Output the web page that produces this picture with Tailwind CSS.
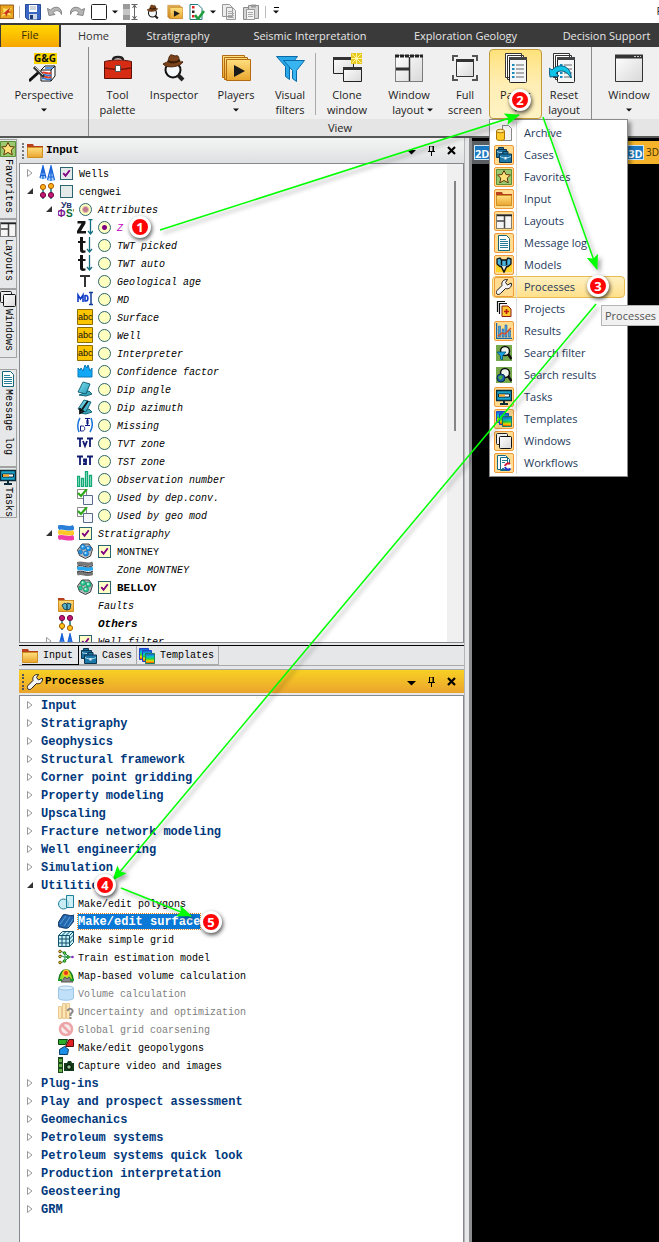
<!DOCTYPE html>
<html lang="en">
<head>
<meta charset="utf-8">
<meta name="viewport" content="width=device-width, initial-scale=1">
<title>Petrel workspace</title>
<script src="https://cdn.jsdelivr.net/npm/@tailwindcss/browser@4"></script>
</head>
<body class="relative min-h-screen overflow-x-hidden bg-[#e6e7e9] font-['Open_Sans','Noto_Sans',sans-serif] text-[11px] text-[#1c1c1c]">

<svg class="absolute size-0" aria-hidden="true">
  <defs>
    <linearGradient id="gold" x1="0" y1="0" x2="0" y2="1"><stop offset="0" stop-color="#ffdf80"/><stop offset="1" stop-color="#e9a52c"/></linearGradient>
    <linearGradient id="rain" x1="0" y1="0" x2="0" y2="1"><stop offset="0" stop-color="#2255dd"/><stop offset=".35" stop-color="#00c8c8"/><stop offset=".55" stop-color="#30d030"/><stop offset=".75" stop-color="#f5e000"/><stop offset="1" stop-color="#e82000"/></linearGradient>
    <linearGradient id="cyan" x1="0" y1="0" x2="1" y2="1"><stop offset="0" stop-color="#8fe4f0"/><stop offset="1" stop-color="#1795b5"/></linearGradient>
    <linearGradient id="pane" x1="0" y1="0" x2="1" y2="1"><stop offset="0" stop-color="#fff"/><stop offset="1" stop-color="#d8d8d8"/></linearGradient>
  </defs>

  <!-- 16px icons -->
  <symbol id="logo" viewBox="0 0 16 16"><path d="M0 0h15.500v15.500H0z" fill="#e8a41c" stroke="#8a4a10"/><path d="M3 3c3 2 6 1 11 0-4 3-4 6 0 10-5-3-8-3-13 1 3-4 4-7 2-11z" fill="#ffe36b"/><path d="M2 10c4-1 5-4 7-5l3-2-2 4 4 1-5 1-2 4-1-3z" fill="#c8321c"/></symbol>
  <symbol id="save" viewBox="0 0 16 16"><path d="M1 .5h14.500v15H2.500L.5 13.500V.5z" fill="#3c66c4" stroke="#274a94"/><path d="M4 1h8v7H4z" fill="#fff"/><path d="M5 3h6M5 5h6" stroke="#9ab"/><path d="M4 10h8v5.500H4z" fill="#cdd6e6"/><path d="M5 11h3v4H5z" fill="#1d3770"/></symbol>
  <symbol id="undo" viewBox="0 0 16 16"><path d="M.5 4.500l1.500 7 6-1-2-2C9 5.500 13 6 14.500 10.500 15.500 3 8 1 3.500 6z" fill="#b5b5b5" stroke="#858585"/></symbol>
  <symbol id="square" viewBox="0 0 16 16"><rect x=".5" y=".5" width="15" height="15" rx="1" fill="#fff" stroke="#222"/></symbol>
  <symbol id="split" viewBox="0 0 16 16"><path d="M0 0h7v16H0z" fill="#9b9b9b"/><path d="M0 5h7v6H0z" fill="#c6c6c6"/><path d="M8.500.5h6M8.500 15.500h6M11.500 1v14M9.500 4l2-3 2 3M9.500 12l2 3 2-3" fill="none" stroke="#666"/></symbol>
  <symbol id="inspector" viewBox="0 0 30 30"><circle cx="14" cy="17" r="7.500" fill="#f5f8fa" stroke="#111" stroke-width="2"/><path d="M19 22l5 5" stroke="#222" stroke-width="4"/><path d="M4 11c3-2 4-1 5-3 1-4 2-7 4-6l3 1c3-1 4 0 4 4l1 2c2 0 2-1 3 0-3 5-16 7-20 2z" fill="#7a431b" stroke="#4c260b"/><path d="M9 8c4 2 8 2 12-1" stroke="#3a1b06" stroke-width="2" fill="none"/></symbol>
  <symbol id="players" viewBox="0 0 30 30"><g stroke="#b36a10" fill="url(#gold)"><path d="M1.500 2.500h22v22h-22z"/><path d="M3.500 4.500h23v22h-23z"/><path d="M5.500 6.500h24v21h-24z"/></g><path d="M13 12l11 6-11 6z" fill="#1b1b1b"/></symbol>
  <symbol id="checklist" viewBox="0 0 16 16"><path d="M1 .5h8l4 4v11H1z" fill="#fff" stroke="#207a80"/><path d="M3 2h2.500v2.500H3z" fill="#d22"/><path d="M3 6.500h2.500V9H3z" fill="#222"/><path d="M3 11h2.500v2.500H3z" fill="#d22"/><path d="M6 11l3 4 6-8" fill="none" stroke="#1d9c3c" stroke-width="2.500"/></symbol>
  <symbol id="copy" viewBox="0 0 16 16"><path d="M1.500.5h7l3 3v9h-10zM5.500 3.500h6l3 3v9h-9z" fill="#ededed" stroke="#999"/><path d="M7 7.500h5M7 9.500h6M7 11.500h6M7 13.500h6" stroke="#aaa"/></symbol>
  <symbol id="paste" viewBox="0 0 16 16"><path d="M.5 3.500h5v12h-5zM5.500 1.500h10v13h-10z" fill="#d5d5d5" stroke="#8a8a8a"/><path d="M8 .5h5v3H8z" fill="#999"/><path d="M3.500 5.500h8v10h-8z" fill="#f4f4f4" stroke="#999"/><path d="M5 8.500h5M5 10.500h5M5 12.500h5" stroke="#aaa"/></symbol>

  <symbol id="folder" viewBox="0 0 16 16"><path d="M0 1h6l1 2h9v3H0z" fill="#b8401c"/><path d="M.5 4.500h15v10H.5z" fill="url(#gold)" stroke="#cf8f23"/></symbol>
  <symbol id="wells" viewBox="0 0 16 16"><path d="M4 0l3 14H1zM12 0l3.500 16h-7z" fill="#a8d0f8"/><g fill="none" stroke="#1762d8" stroke-width="1.200"><path d="M4 0v14M4 1L1 13M4 1l3 12M2 7h4M1 10.500h6"/><path d="M12 0v16M12 1L8.500 15M12 1l3.500 14M10 8h4M9 12h6"/></g></symbol>
  <symbol id="pins" viewBox="0 0 16 16"><path d="M4 3v13M12 2v14" stroke="#147078" stroke-width="1.500"/><circle cx="4" cy="4" r="2.600" fill="#ffae1a" stroke="#a86000"/><circle cx="12" cy="3" r="2.600" fill="#ffae1a" stroke="#a86000"/><circle cx="4" cy="12" r="2.600" fill="#c01874" stroke="#700840"/><circle cx="12" cy="12" r="2.600" fill="#c01874" stroke="#700840"/></symbol>
  <symbol id="pins2" viewBox="0 0 16 16"><path d="M4 1v14M12 1v14" stroke="#147078" stroke-width="1.500"/><circle cx="4" cy="3" r="2.600" fill="#c01874" stroke="#700840"/><circle cx="12" cy="3" r="2.600" fill="#c01874" stroke="#700840"/><circle cx="4" cy="11" r="2.600" fill="#ffc21a" stroke="#a86000"/><circle cx="12" cy="13" r="2.600" fill="#ffc21a" stroke="#a86000"/></symbol>
  <symbol id="attr" viewBox="0 0 16 16"><g font-family="Liberation Sans" font-weight="bold"><text x="3" y="7" font-size="9" fill="#25306e">Ув</text><text x="-1" y="16" font-size="10" fill="#7a1590">Ф</text><text x="8" y="16" font-size="10" fill="#0b6a35">S'</text></g></symbol>
  <symbol id="zarrow" viewBox="0 0 16 16"><path d="M.5 2h8v2.500L4 12h5v2.500H0V12l4.500-7.500h-4z" fill="#151515"/><path d="M11.500.5h4M13.500 0v15M11 12l2.500 3 2.500-3" stroke="#147080" fill="none" stroke-width="1.300"/></symbol>
  <symbol id="tarrow" viewBox="0 0 16 16"><path d="M3 0h3v4h2.500v2H6v6.500c0 1 1 1.300 2.500 1v2C5 16.500 3 15.500 3 13V6H1V4h2z" fill="#151515"/><path d="M12.500 0v15M10 12l2.500 3 2.500-3" stroke="#147080" fill="none" stroke-width="1.300"/></symbol>
  <symbol id="bigt" viewBox="0 0 16 16"><path d="M3 3h10M8 3v11" stroke="#333" stroke-width="2"/></symbol>
  <symbol id="md" viewBox="0 0 16 16"><path d="M1 11V4l2.500 4L6 4v7M8 4v6h1c2.500 0 2.500-5.500 0-5.500H8" stroke="#103cc8" stroke-width="1.600" fill="none"/><path d="M12 1.500h4M12 13.500h4M14 2v11" stroke="#103c98" stroke-width="1.500"/></symbol>
  <symbol id="abc" viewBox="0 0 16 16"><path d="M.5.5h15v15H.5z" fill="#fdc400" stroke="#8d6c00"/><text x="1" y="11" font-family="Liberation Sans" font-size="9" fill="#111">abc</text></symbol>
  <symbol id="crown" viewBox="0 0 16 16"><path d="M1 14V5l2 2 1-2 2 3 2-6 2 3 1-3 2 6 2-3v9z" fill="#12a8f5" stroke="#0878b8"/></symbol>
  <symbol id="dip" viewBox="0 0 16 16"><path d="M2 14l7 1 6-2-3-3z" fill="#3aa8b8" stroke="#14657a"/><path d="M1 11L6 1l7 2-4 10z" fill="url(#cyan)" stroke="#14657a"/></symbol>
  <symbol id="dipaz" viewBox="0 0 16 16"><path d="M3 14l6 1 6-2-3-3z" fill="#3aa8b8" stroke="#14657a"/><path d="M1 10L7 1l7 2-5 10z" fill="url(#cyan)" stroke="#14657a"/><path d="M11 2L4 12M3 9v5l4-2" stroke="#111" stroke-width="1.800" fill="none"/></symbol>
  <symbol id="missing" viewBox="0 0 16 16"><path d="M3 1C.5 5 .5 11 2 15M14 1c2 5 1.500 10-1 14" fill="none" stroke="#1874d8" stroke-width="1.500"/><path d="M3.500 9v5h2c3 0 3-5 0-5z" fill="none" stroke="#101a80"/><path d="M8 1.500h5M8 8.500h5M10.500 2v6M9 4h3M9 6h3" stroke="#101a80" stroke-width="1.200"/></symbol>
  <symbol id="tvt" viewBox="0 0 16 16"><path d="M0 3.500h6M3 4v8M10 3.500h6M13 4v8M6 6l2 5 2-5" fill="none" stroke="#101a70" stroke-width="1.800"/></symbol>
  <symbol id="tst" viewBox="0 0 16 16"><path d="M0 3.500h6M3 4v8M10 3.500h6M13 4v8M10 6.500H7v2h2v2.500H6" fill="none" stroke="#101a70" stroke-width="1.800"/></symbol>
  <symbol id="bars" viewBox="0 0 16 16"><path d="M.5 5.500h2v10h-2zM4.500 7.500h2v8h-2zM8.500.5h2v15h-2zM12.500 4.500h2v11h-2z" fill="#a8f0d0" stroke="#12a878" stroke-width="1.300"/></symbol>
  <symbol id="used" viewBox="0 0 16 16"><path d="M.5.5h9v9h-9z" fill="#fff" stroke="#888"/><path d="M6.500 6.500h9v9h-9z" fill="#f4f6fb" stroke="#5a6a8a"/><path d="M1 4l3 3 6-7" stroke="#2aa818" stroke-width="2.200" fill="none"/></symbol>
  <symbol id="strata" viewBox="0 0 16 16"><g fill="none" stroke-width="4.600"><path d="M0 3c5-3 10 3 16-1" stroke="#2a7fd8"/><path d="M0 8c5-3 10 3 16-1" stroke="#ffc727"/><path d="M0 13c5-3 10 3 16-1" stroke="#f03ca8"/></g></symbol>
  <symbol id="zone" viewBox="0 0 16 16"><g fill="none" stroke-width="3.500"><path d="M0 3c5-3 10 3 16-1" stroke="#777"/><path d="M0 13c5-3 10 3 16-1" stroke="#777"/><path d="M0 8c5-3 10 3 16-1" stroke="#28a8f0"/><path d="M0 5.500c5-3 10 3 16-1M0 11c5-3 10 3 16-1" stroke="#222" stroke-width="1"/></g></symbol>
  <symbol id="hexb" viewBox="0 0 16 16"><path d="M5 1h7l3.500 5-2 7-5 2.500-6-3L.5 7z" fill="#b4bcc2" stroke="#444"/><g fill="#1e96ea" stroke="#0a5294" stroke-width=".5"><circle cx="6" cy="4" r="2.600"/><circle cx="11.500" cy="5.500" r="2.600"/><circle cx="3.500" cy="9" r="2"/><circle cx="9" cy="10.500" r="2.600"/></g><g fill="#bfe6ff"><circle cx="5.500" cy="3.500" r="1"/><circle cx="11" cy="5" r="1"/><circle cx="8.500" cy="10" r="1"/></g></symbol>
  <symbol id="hexg" viewBox="0 0 16 16"><path d="M5 1h7l3.500 5-2 7-5 2.500-6-3L.5 7z" fill="#b4bcc2" stroke="#444"/><g fill="#28c890" stroke="#0c7048" stroke-width=".5"><circle cx="6" cy="4" r="2.600"/><circle cx="11.500" cy="5.500" r="2.600"/><circle cx="3.500" cy="9" r="2"/><circle cx="9" cy="10.500" r="2.600"/></g><g fill="#c8ffe8"><circle cx="5.500" cy="3.500" r="1"/><circle cx="11" cy="5" r="1"/><circle cx="8.500" cy="10" r="1"/></g></symbol>
  <symbol id="faults" viewBox="0 0 16 16"><path d="M0 1h6l1 2h9v3H0z" fill="#b8401c"/><path d="M.5 3.500h15v11H.5z" fill="url(#gold)" stroke="#cf8f23"/><path d="M4 8l3-2 2 2v5l-3-1zM9 6l4 1-1 5-3 1z" fill="#58b0c8" stroke="#1a4a5a"/></symbol>
  <symbol id="cases" viewBox="0 0 16 16"><path d="M2.500 2.500V.5h5v2M.5 2.500h10v8H.5z" fill="#1d6f9c" stroke="#0c3550"/><path d="M7 7V4.500h5V7M3.500 7h12v8.500h-12z" fill="#1d78a8" stroke="#0c3550"/><path d="M4 9.500c4 2 7 2 11 0M1 4.500c2 1 3 1 5 1" stroke="#b8e0f0" fill="none"/><path d="M8.500 10h2v2.500h-2z" fill="#e8f6fc"/></symbol>
  <symbol id="templates" viewBox="0 0 16 16"><path d="M.5.500h9v11h-9z" fill="url(#rain)" stroke="#24c"/><path d="M3.500 2.500h9v11h-9z" fill="url(#rain)" stroke="#24c"/><path d="M6.500 5.500h9v10h-9z" fill="url(#rain)" stroke="#1a8060"/></symbol>
  <symbol id="wrench" viewBox="0 0 16 16"><path d="M1 15c-1-1-1-2.500 0-3.500l5-5c-.8-3 1-6 4.500-6h1l-2 3 2 2.500 3.500-2 .5 1c0 3.500-3 5.500-6 4.500l-5 5c-1 1-2.500 1.500-3.500.5z" fill="#f5f5f5" stroke="#1a1a1a"/></symbol>
  <symbol id="star" viewBox="0 0 16 16"><path d="M.5.500h15v15H.5z" fill="#9cc870" stroke="#5a9038"/><path d="M8 1.500l2 4 4.500.5-3.300 3 1 4.800L8 11.500l-4.200 2.300 1-4.800L1.500 6 6 5.500z" fill="#ffdf7a" stroke="#60380c"/></symbol>
  <symbol id="layouts" viewBox="0 0 16 16"><path d="M.5 1.500h15v14H.5z" fill="#f5f5f5" stroke="#111" stroke-dasharray="1 1"/><path d="M1 2.500h15" stroke="#222" stroke-width="1.500"/><path d="M1 8h7M8.500 3v12" stroke="#444" stroke-width="1.500"/></symbol>
  <symbol id="windows" viewBox="0 0 16 16"><rect x=".5" y=".5" width="11" height="11" rx="1" fill="#eee" stroke="#222"/><rect x="3.500" y="3.500" width="12" height="12" rx="1" fill="url(#pane)" stroke="#111"/></symbol>
  <symbol id="message" viewBox="0 0 16 16"><path d="M2.500.500h8l3 3v12h-11z" fill="#fff" stroke="#14657a"/><path d="M4 4.500h6M4 6.500h8M4 8.500h8M4 10.500h8M4 12.500h8" stroke="#2a7f98"/></symbol>
  <symbol id="tasks" viewBox="0 0 16 16"><path d="M.5 1.500h15v10H.5z" fill="#18a4cc" stroke="#0a2a38" stroke-width="1.500"/><path d="M2.500 5h11v3h-11z" fill="#fff" stroke="#0a2a38"/><path d="M3 5.500h6v2H3z" fill="#ffa81c"/><path d="M7 12h2v2h3v2H4v-2h3z" fill="#0a2a38"/></symbol>
  <symbol id="archive" viewBox="0 0 16 16"><path d="M6.500.5h6l3 3v12h-9z" fill="#f4f4f4" stroke="#888"/><path d="M.5 6v8c0 2 8 2 8 0V6z" fill="#ffca28" stroke="#a87400"/><ellipse cx="4.500" cy="6" rx="4" ry="1.800" fill="#ffe890" stroke="#a87400"/></symbol>
  <symbol id="models" viewBox="0 0 16 16"><path d="M0 8h5l3 5 3-5h5v7H0z" fill="#ffd428"/><path d="M1 2l3-1 1.500 2h5L12 1l3 1v5l-3 2.500H4L1 7z" fill="#48b4e0" stroke="#111" stroke-width="1.300"/><path d="M5.500 3v5M10.500 3v5M5 9l3 6 3-6" stroke="#111" stroke-width="1.500" fill="#ddd"/></symbol>
  <symbol id="projects" viewBox="0 0 16 16"><path d="M1.500 11V.5H9M3.500 13V2.500H11" fill="none" stroke="#111" stroke-width="1.200"/><path d="M6 5h6l3 3v7.500H6z" fill="#ffc82c" stroke="#8c1c10"/><path d="M10.500 8v5M8 10.500h5" stroke="#b81c10" stroke-width="1.600"/></symbol>
  <symbol id="results" viewBox="0 0 16 16"><path d="M.5 0v15.500H16" stroke="#1864a8" stroke-width="1.500" fill="none"/><path d="M2.500 3h2v11h-2zM6 6h2v8H6zM9 2h2v12H9zM12.500 7h2v7h-2z" fill="#4da0dc" stroke="#1864a8" stroke-width=".6"/><path d="M2 13l4-3 3 1 6-6" stroke="#e04a20" stroke-width="1.300" fill="none"/></symbol>
  <symbol id="sfilter" viewBox="0 0 16 16"><path d="M0 0h16v16H0z" fill="#76a84c"/><circle cx="9" cy="6" r="4.500" fill="#eef6ee" stroke="#111" stroke-width="1.500"/><path d="M12 9l3.500 5" stroke="#111" stroke-width="2.500"/><path d="M1 7h9l-3.500 4v4L4.500 14v-3z" fill="#18a4e0" stroke="#08507a" stroke-width=".8"/></symbol>
  <symbol id="sresults" viewBox="0 0 16 16"><path d="M0 0h16v16H0z" fill="#76a84c"/><circle cx="9" cy="6" r="4.500" fill="#eef6ee" stroke="#111" stroke-width="1.500"/><path d="M12 9l3.500 5" stroke="#111" stroke-width="2.500"/><circle cx="5" cy="11" r="4" fill="#1c5fb0" stroke="#0a2a58"/><path d="M2 10l3-2 2 2-2 3-2-1z" fill="#48b048"/></symbol>
  <symbol id="workflows" viewBox="0 0 16 16"><path d="M1.500.5h8l2 2v12h-10zM4.500 2.500h7l2 2v11h-9z" fill="#fff" stroke="#146a88"/><path d="M6 5.500h5M6 7.500h3M6 13.500h2" stroke="#2a7f98"/><circle cx="12" cy="11.500" r="3.200" fill="#fff"/><path d="M14 9a3.200 3.200 0 0 0-5 2" fill="none" stroke="#d01c38" stroke-width="2"/><path d="M9 12a3.200 3.200 0 0 0 5.500 1.500" fill="none" stroke="#2434c8" stroke-width="2"/></symbol>
  <symbol id="poly" viewBox="0 0 16 16"><circle cx="5.500" cy="9" r="5" fill="#c8ecf4" stroke="#20809a"/><path d="M8.500.500h7v12h-7z" fill="#b8e8f2" fill-opacity=".7" stroke="#20809a"/></symbol>
  <symbol id="surf" viewBox="0 0 16 16"><path d="M0 10L5 2c3-2 6 2 11 0v6l-5 6c-3 3-6 0-10 0z" fill="#2467ac" stroke="#0c2f60"/><path d="M2 11l6-8M6 13l6-9M10 14l5-8" stroke="#6ab0e8" fill="none" stroke-width=".8"/></symbol>
  <symbol id="grid" viewBox="0 0 16 16"><path d="M.5 4.500l4-4h11v11l-4 4H.5z" fill="#c4f0fa" stroke="#13506a"/><path d="M.5 4.500h11v11M11.500 4.500l4-4M.5 8h11l4-4M.5 12h11l4-4M4 4.500v11M8 4.500v11M4 4.500l4-4M8 4.500l4-4" fill="none" stroke="#13506a"/></symbol>
  <symbol id="train" viewBox="0 0 16 16"><path d="M2 2l5 2v8l-5 2M7 4l4 4H6L2 6M7 12l4-4h4" fill="none" stroke="#1c8c50"/><g fill="#e8c23c" stroke="#6a5410"><circle cx="2" cy="2.500" r="1.300"/><circle cx="2" cy="7.500" r="1.300"/><circle cx="2" cy="13.500" r="1.300"/></g><g fill="#58d838" stroke="#1c7c20"><circle cx="6.500" cy="4" r="1.300"/><circle cx="6.500" cy="12" r="1.300"/><circle cx="10" cy="8" r="1.300"/></g><circle cx="14.500" cy="8" r="1.300" fill="#8a30c8"/></symbol>
  <symbol id="mapvol" viewBox="0 0 16 16"><path d="M1 12C3 0 13 0 15 12" fill="#9be028" stroke="#147a1c" stroke-width="1.500"/><circle cx="8" cy="6" r="3.500" fill="#ffc020"/><circle cx="8" cy="6" r="2" fill="#e8341c"/><path d="M3 15l4-5 2 2 2-2 4 5z" fill="#888" stroke="#555"/><path d="M0 13h4M12 13h4" stroke="#1c9c28" stroke-width="2"/></symbol>
  <symbol id="vol" viewBox="0 0 16 16"><path d="M.5 3v10c0 3 15 3 15 0V3z" fill="#bfe0f8" stroke="#9cc4e4"/><ellipse cx="8" cy="3" rx="7.500" ry="2" fill="#dcf0fc" stroke="#9cc4e4"/></symbol>
  <symbol id="uncert" viewBox="0 0 16 16"><path d="M.5 3.500h3v12h-3zM4.500.5h3v15h-3zM8.500 .5h3v15h-3z" fill="#fbe6b4" stroke="#e8c890"/><path d="M9.500 8c1-4 6-2 5 1l-2 2v2M12.500 14v2" fill="none" stroke="#888" stroke-width="2"/></symbol>
  <symbol id="nogo" viewBox="0 0 16 16"><circle cx="8" cy="8" r="6" fill="#f6eaea" stroke="#eda4a8" stroke-width="2.500"/><path d="M4 4l8 8" stroke="#eda4a8" stroke-width="2.500"/></symbol>
  <symbol id="geopoly" viewBox="0 0 16 16"><path d="M.5.500h9l-2 5h-7z" fill="#2cb02c" stroke="#0c400c"/><path d="M11 .5h4.500v7h-8z" fill="#e02020" stroke="#501010"/><path d="M1.500 15.500v-5l5-3 4 3-1 5z" fill="#1c90e8" stroke="#0a406c"/></symbol>
  <symbol id="capture" viewBox="0 0 16 16"><path d="M0 0h5v16H0z" fill="#1c4c1c"/><path d="M1 2h3v3H1zM1 7h3v3H1zM1 12h3v3H1z" fill="#68b048"/><path d="M6 6h3l1-2h3l1 2h2v8H6z" fill="#143c18"/><circle cx="11" cy="10" r="2.300" fill="#90c890" stroke="#000"/></symbol>

  <!-- ribbon icons -->
  <symbol id="persp" viewBox="0 0 30 30"><path d="M5 0h23v11H5z" fill="#ffd800"/><text x="5" y="9" font-family="Open Sans" font-weight="bold" font-size="10" fill="#111">G&amp;G</text><path d="M12 17l4-4h10v10l-4 5H12z" fill="#fff" stroke="#111"/><path d="M12 17h10l4-4M22 17v11" stroke="#111" fill="none"/><path d="M13 20c3-2 5 2 9 0M13 24c3-2 5 2 9 0" stroke="#e04028" stroke-width="2" fill="none"/><path d="M13 22c3-2 5 2 9 0M13 26c3-2 5 2 9 0M16 15h8" stroke="#2878d8" stroke-width="1.500" fill="none"/><path d="M0 28l10-9" stroke="#111" stroke-width="3"/><path d="M5 14l10 10" stroke="#333" stroke-width="3"/><path d="M6 14l8 8" stroke="#ccc"/></symbol>
  <symbol id="toolbox" viewBox="0 0 30 30"><path d="M10 7c0-4 10-4 10 0" fill="none" stroke="#222" stroke-width="2.500"/><path d="M1.500 8.500c9-2 18-2 27 0v17h-27z" fill="#d62c14" stroke="#5c1008"/><path d="M2 15c9 2 17 2 26 0" stroke="#7a1408" fill="none" stroke-width="1.500"/><path d="M12.500 12.500h5v6h-5z" fill="#fff" stroke="#555"/></symbol>
  <symbol id="filters" viewBox="0 0 30 30"><path d="M1.500 3.500h21l-8 10v13l-4-3v-10z" fill="#28a8e8" stroke="#0a6aa8"/><path d="M8.500 7.500h21l-8 10v11l-4-3v-8z" fill="#38b4f0" stroke="#0a6aa8"/></symbol>
  <symbol id="clone" viewBox="0 0 30 30"><path d="M1.500 4.500h20v16h-20z" fill="url(#pane)" stroke="#222"/><path d="M1 5.500h21" stroke="#333" stroke-width="3"/><path d="M11.500 14.500h18v14h-18z" fill="url(#pane)" stroke="#222"/><path d="M11 15.500h19" stroke="#333" stroke-width="3"/><path d="M19 0h11v11H19z" fill="#e8c820"/><path d="M20 1l9 9M29 1l-9 9M24.500 0v11M19 5.500h11" stroke="#fff8a0"/></symbol>
  <symbol id="wlayout" viewBox="0 0 30 30"><path d="M1.500 2.500h27v26h-27z" fill="url(#pane)" stroke="#111" stroke-dasharray="1 1"/><path d="M1 3h28" stroke="#222" stroke-width="3" stroke-dasharray="4 1"/><path d="M2 16h13" stroke="#333" stroke-width="3"/><path d="M15.500 4v24" stroke="#333" stroke-width="1.500"/></symbol>
  <symbol id="full" viewBox="0 0 30 30"><path d="M3 8V3h5M22 3h5v5M27 22v5h-5M8 27H3v-5" fill="none" stroke="#555" stroke-width="2"/><path d="M6.500 6.500h17v17h-17z" fill="url(#pane)" stroke="#333"/><path d="M6 7.500h18" stroke="#333" stroke-width="3"/></symbol>
  <symbol id="panes" viewBox="0 0 30 30"><path d="M4.500.5h16v24h-16zM6.500 2.500h16v24h-16z" fill="#fff" stroke="#333"/><rect x="8.500" y="4.500" width="17" height="25" rx="1" fill="#f4f6f8" stroke="#222"/><path d="M8 5.500h18" stroke="#444" stroke-width="3"/><path d="M11 12h2.500M11 16h2.500M11 20h2.500M11 24h2.500" stroke="#1888b8" stroke-width="2"/><path d="M15 12h8M15 16h8M15 20h8M15 24h8" stroke="#666"/></symbol>
  <symbol id="reset" viewBox="0 0 30 30"><use href="#panes"/><path d="M0 15l1 9 9-1-3-3c5-4 11-2 15 5 1-10-10-17-19-8z" fill="#10c4e8" stroke="#0a5c80"/></symbol>
  <symbol id="window" viewBox="0 0 30 30"><path d="M1.500 2.500h27v26h-27z" fill="url(#pane)" stroke="#333"/><path d="M1 3.500h28" stroke="#333" stroke-width="4"/><path d="M20 3.500h7" stroke="#ccc" stroke-dasharray="2 1"/></symbol>

  <symbol id="caret" viewBox="0 0 8 8"><path d="M1 2.500h6L4 5.500z" fill="#111"/></symbol>
  <symbol id="drop" viewBox="0 0 10 10"><path d="M0 4h9L4.500 8.500z" fill="#000"/></symbol>
  <symbol id="pin" viewBox="0 0 10 10"><path d="M2.500 0v5.500h4V0zM1 5.500h7M4.500 6v4M6 0v5" fill="none" stroke="#000"/></symbol>
  <symbol id="close" viewBox="0 0 10 10"><path d="M1 1l7 7M8 1L1 8" stroke="#000" stroke-width="2.200"/></symbol>
  <symbol id="shut" viewBox="0 0 8 8"><path d="M1.500.500L6 4 1.500 7.500z" fill="#fff" stroke="#999"/></symbol>
  <symbol id="opened" viewBox="0 0 8 8"><path d="M7 1v6H1z" fill="#333"/></symbol>
  <symbol id="tick" viewBox="0 0 14 14"><path d="M3.500 6.500l2.500 3 4.500-6" fill="none" stroke="#800080" stroke-width="2"/></symbol>
</svg>

<header>
  <div class="flex h-[23px] items-center bg-white">
    <button aria-label="Petrel"><svg class="h-4 w-[14px]"><use href="#logo"/></svg></button>
    <span class="mx-[5px] h-3 w-px bg-[#bbb]"></span>
    <div class="flex items-center gap-[6px]">
      <button aria-label="Save"><svg class="size-4"><use href="#save"/></svg></button>
      <button aria-label="Undo"><svg class="size-4"><use href="#undo"/></svg></button>
      <button aria-label="Redo"><svg class="size-4 -scale-x-100"><use href="#undo"/></svg></button>
      <button aria-label="New window"><svg class="size-4"><use href="#square"/></svg></button>
      <button aria-label="Window options" class="-mx-[2px]"><svg class="size-2"><use href="#caret"/></svg></button>
      <button aria-label="Column height"><svg class="size-4"><use href="#split"/></svg></button>
      <button aria-label="Inspector"><svg class="size-4"><use href="#inspector"/></svg></button>
      <button aria-label="Players"><svg class="size-4"><use href="#players"/></svg></button>
      <button aria-label="Checklist"><svg class="size-4"><use href="#checklist"/></svg></button>
      <button aria-label="Checklist options" class="-mx-[2px]"><svg class="size-2"><use href="#caret"/></svg></button>
      <button aria-label="Copy"><svg class="size-4"><use href="#copy"/></svg></button>
      <button aria-label="Paste"><svg class="size-4"><use href="#paste"/></svg></button>
      <span class="h-3 w-px bg-[#bbb]"></span>
      <button aria-label="Customize toolbar" class="flex flex-col items-center"><span class="h-px w-[5px] bg-black"></span><svg class="size-2"><use href="#caret"/></svg></button>
    </div>
    <span class="ml-auto -mr-1">P</span>
  </div>

  <nav class="flex h-6 items-stretch bg-[#3a3a3a] pt-[2px] pl-px text-[#e6e6e6]">
    <button class="w-[58px] shrink-0 bg-linear-to-b from-[#ffd800] to-[#f6a500] pb-[2px] text-[#3a2c00]">File</button>
    <button class="ml-[2px] w-[65px] shrink-0 bg-[#f0f0f0] text-[#333]">Home</button>
    <button class="w-[104px] shrink-0">Stratigraphy</button>
    <button class="w-[160px] shrink-0">Seismic Interpretation</button>
    <button class="w-[151px] shrink-0">Exploration Geology</button>
    <button class="w-[131px] shrink-0">Decision Support</button>
  </nav>

  <div class="flex h-[91px] overflow-hidden border-b-2 border-[#555856] bg-[#f0f0f0] leading-[15px]">
    <section class="flex w-[89px] shrink-0 flex-col border-r border-[#8c8c8c]">
      <div class="flex h-[72px] justify-center pt-[6px]">
        <button class="flex w-20 flex-col items-center"><svg class="mb-1 size-[30px]"><use href="#persp"/></svg>Perspective<svg class="mt-1 size-2"><use href="#caret"/></svg></button>
      </div>
      <div class="grow bg-[#e5e5e5]"></div>
    </section>
    <section class="flex w-[503px] shrink-0 flex-col border-r border-[#8c8c8c]">
      <div class="flex h-[72px] items-start">
        <button class="flex w-[57px] flex-col items-center pt-[6px]"><svg class="mb-1 size-[30px]"><use href="#toolbox"/></svg>Tool<br>palette</button>
        <button class="flex w-14 flex-col items-center pt-[6px]"><svg class="mb-1 size-[30px]"><use href="#inspector"/></svg>Inspector</button>
        <button class="flex w-[68px] flex-col items-center pt-[6px]"><svg class="mb-1 size-[30px]"><use href="#players"/></svg>Players<svg class="mt-1 size-2"><use href="#caret"/></svg></button>
        <button class="flex w-10 flex-col items-center pt-[6px]"><svg class="mb-1 size-[30px]"><use href="#filters"/></svg>Visual<br>filters</button>
        <span class="mx-[5px] mt-[6px] h-[62px] w-px bg-[#aaa]"></span>
        <button class="flex w-[52px] flex-col items-center pt-[6px]"><svg class="mb-1 size-[30px]"><use href="#clone"/></svg>Clone<br>window</button>
        <button class="flex w-[72px] flex-col items-center pt-[6px]"><svg class="mb-1 size-[30px]"><use href="#wlayout"/></svg>Window<span class="flex items-center gap-[2px] pl-2">layout<svg class="size-2"><use href="#caret"/></svg></span></button>
        <button class="flex w-10 flex-col items-center pt-[6px]"><svg class="mb-1 size-[30px]"><use href="#full"/></svg>Full<br>screen</button>
        <button class="mt-[2px] ml-1 flex h-[70px] w-[53px] flex-col items-center rounded-sm border border-[#c29a3c] bg-linear-to-b from-[#ffe27a] via-[#ffeeb4] to-[#fff3c4] pt-[3px]"><svg class="mb-1 size-[30px]"><use href="#panes"/></svg>Panes<svg class="mt-1 size-2"><use href="#caret"/></svg></button>
        <button class="flex w-11 flex-col items-center pt-[6px]"><svg class="mb-1 size-[30px]"><use href="#reset"/></svg>Reset<br>layout</button>
      </div>
      <div class="flex grow items-center justify-center bg-[#e5e5e5]">View</div>
    </section>
    <section class="flex w-[74px] grow shrink-0 flex-col">
      <div class="flex h-[72px] pt-[6px]">
        <button class="flex w-[74px] flex-col items-center"><svg class="mb-1 size-[30px]"><use href="#window"/></svg>Window<svg class="mt-1 size-2"><use href="#caret"/></svg></button>
      </div>
      <div class="grow bg-[#e5e5e5]"></div>
    </section>
  </div>
</header>

<main class="flex min-h-[1104px] font-['Liberation_Mono',monospace] text-[10px] text-black">
  <nav id="side" class="flex w-[17px] shrink-0 flex-col pt-px"></nav>

  <div class="ml-[2px] flex w-[445px] shrink-0 flex-col">
    <section>
      <div class="flex h-[25px] items-center bg-linear-to-b from-[#f4f4f4] to-[#dfe0e2] pr-[7px] pl-[3px]">
        <span class="h-4 border-l-2 border-dotted border-[#777]"></span>
        <svg class="ml-[3px] size-4"><use href="#folder"/></svg>
        <h2 class="ml-[3px] grow text-[11px] font-bold">Input</h2>
        <div class="flex gap-[10px]">
          <button aria-label="Panel menu"><svg class="size-[10px]"><use href="#drop"/></svg></button>
          <button aria-label="Pin panel"><svg class="size-[10px]"><use href="#pin"/></svg></button>
          <button aria-label="Close panel"><svg class="size-[10px]"><use href="#close"/></svg></button>
        </div>
      </div>
      <div class="flex h-[480px] overflow-hidden border border-[#85898f] bg-white">
        <div id="tree" class="grow"></div>
        <div class="flex w-4 justify-center bg-[#f0f0f0] pt-[17px]"><span class="h-[250px] w-[2px] bg-[#858585]"></span></div>
      </div>
      <div class="mt-[2px] flex h-[21px] border-y border-t-black border-b-[#aaa] pl-[3px]">
        <button class="flex items-center gap-[5px] border-r border-b border-black pt-px pr-[5px]"><svg class="size-4"><use href="#folder"/></svg>Input</button>
        <button class="flex items-center gap-[5px] border-r border-b border-[#aaa] pt-px pr-1 pl-[2px]"><svg class="size-4"><use href="#cases"/></svg>Cases</button>
        <button class="flex items-center gap-[5px] border-r border-b border-[#aaa] pt-px pr-1 pl-[2px]"><svg class="size-4"><use href="#templates"/></svg>Templates</button>
      </div>
    </section>

    <section class="mt-[3px] flex grow flex-col">
      <div class="flex h-6 items-center border-t border-[#a9a9a9] bg-linear-to-b from-[#f8d022] to-[#eaa42c] pr-[7px] pl-[3px]">
        <span class="h-4 border-l-2 border-dotted border-[#555]"></span>
        <svg class="ml-[3px] size-4"><use href="#wrench"/></svg>
        <h2 class="ml-[2px] grow text-[11px] font-bold">Processes</h2>
        <div class="flex gap-[10px]">
          <button aria-label="Panel menu"><svg class="size-[10px]"><use href="#drop"/></svg></button>
          <button aria-label="Pin panel"><svg class="size-[10px]"><use href="#pin"/></svg></button>
          <button aria-label="Close panel"><svg class="size-[10px]"><use href="#close"/></svg></button>
        </div>
      </div>
      <div id="procs" class="mt-[2px] grow border border-b-0 border-[#85898f] bg-white"></div>
    </section>
  </div>

  <div class="flex w-2 shrink-0 justify-end border-l border-[#b5b5b5]"><span class="w-[3px] bg-[#8a8c8e]"></span></div>

  <section class="flex min-w-0 grow flex-col bg-black" aria-label="Viewer">
    <div class="mt-[3px] flex h-[23px] items-center bg-[#5b5e62] pl-[2px] font-['Open_Sans','Noto_Sans',sans-serif] font-bold">
      <span class="grid h-[15px] w-4 shrink-0 place-items-center border border-[#cfe8fa] bg-[#1c78c0] text-[11px] text-white">2D</span>
      <div class="ml-auto flex h-full w-8 items-center bg-[#f4b32a]">
        <span class="grid h-[15px] w-[17px] place-items-center border border-[#cfe8fa] bg-[#1c78c0] text-[11px] text-white">3D</span>
        <span class="ml-[2px] font-normal text-[#4a3000]">3D</span>
      </div>
    </div>
  </section>
</main>

<div id="menu" role="menu" class="absolute top-[119px] left-[489px] w-[139px] border border-[#8a8a8a] bg-white p-[2px] shadow-[3px_3px_4px_rgba(0,0,0,0.4)]"></div>
<div role="tooltip" class="absolute top-[305px] left-[601px] h-[21px] border border-[#b5b5b5] bg-[#f1f1f1] px-[3px] leading-[19px] text-[#555]">Processes</div>

<!-- Step-by-step annotation drawn over the workspace -->
<svg class="pointer-events-none absolute top-0 left-0 drop-shadow-[3px_3px_2px_rgba(0,0,0,0.35)]" width="659" height="1242" viewBox="0 0 659 1242" aria-hidden="true">
  <defs><marker id="head" viewBox="0 0 15 12" refX="14" refY="6" markerWidth="15" markerHeight="12" markerUnits="userSpaceOnUse" orient="auto"><path d="M0 0l15 6-15 6 3-6z" fill="#00ff00"/></marker></defs>
  <g stroke="#00ff00" stroke-width="1.500">
    <path d="M160 230L519 115" marker-end="url(#head)"/>
    <path d="M543 117L597 269" marker-end="url(#head)"/>
    <path d="M596 304L113 880" marker-end="url(#head)"/>
    <path d="M121 888L191 916" marker-end="url(#head)"/>
  </g>
</svg>
<div id="badges" class="text-[13px] leading-none font-bold text-white"></div>

<script>
const icon = (id, cls) => `<svg class="${cls || 'size-4 shrink-0'}" aria-hidden="true"><use href="#${id}"/></svg>`;

// side tabs: icon, label, tab height classes
const side = [
  ['star', 'Favorites', 'h-20'],
  ['layouts', 'Layouts', 'h-[70px]'],
  ['windows', 'Windows', 'h-[69px] mb-[11px]'],
  ['message', 'Message log', 'h-[98px]'],
  ['tasks', 'Tasks', 'h-[51px]'],
];
document.getElementById('side').innerHTML = side.map(([i, t, h]) =>
  `<button class="flex w-full shrink-0 flex-col items-center gap-[2px] border border-l-0 border-[#a2a2a2] pt-px ${h}">${icon(i)}<span class="leading-[16px] whitespace-nowrap [writing-mode:vertical-rl]">${t}</span></button>`).join('');

// tree rows: level, expander, icon, control, label, label style
const tree = [
  [0, 'shut', 'wells', 'greyon', 'Wells', ''],
  [0, 'opened', 'pins', 'grey', 'cengwei', ''],
  [1, 'opened', 'attr', 'group', 'Attributes', 'italic'],
  [2, '', 'zarrow', 'radioon', 'Z', 'italic text-[#c000c0]'],
  [2, '', 'tarrow', 'radio', 'TWT picked', 'italic'],
  [2, '', 'tarrow', 'radio', 'TWT auto', 'italic'],
  [2, '', 'bigt', 'radio', 'Geological age', 'italic'],
  [2, '', 'md', 'radio', 'MD', 'italic'],
  [2, '', 'abc', 'radio', 'Surface', 'italic'],
  [2, '', 'abc', 'radio', 'Well', 'italic'],
  [2, '', 'abc', 'radio', 'Interpreter', 'italic'],
  [2, '', 'crown', 'radio', 'Confidence factor', 'italic'],
  [2, '', 'dip', 'radio', 'Dip angle', 'italic'],
  [2, '', 'dipaz', 'radio', 'Dip azimuth', 'italic'],
  [2, '', 'missing', 'radio', 'Missing', 'italic'],
  [2, '', 'tvt', 'radio', 'TVT zone', 'italic'],
  [2, '', 'tst', 'radio', 'TST zone', 'italic'],
  [2, '', 'bars', 'radio', 'Observation number', 'italic'],
  [2, '', 'used', 'radio', 'Used by dep.conv.', 'italic'],
  [2, '', 'used', 'radio', 'Used by geo mod', 'italic'],
  [1, 'opened', 'strata', 'on', 'Stratigraphy', 'italic'],
  [2, '', 'hexb', 'on', 'MONTNEY', ''],
  [2, '', 'zone', '', 'Zone MONTNEY', 'italic'],
  [2, '', 'hexg', 'on', 'BELLOY', 'font-bold text-[11px]'],
  [1, '', 'faults', '', 'Faults', 'italic'],
  [1, '', 'pins2', '', 'Others', 'font-bold italic text-[11px]'],
  [1, 'shut', 'wells', 'on', 'Well filter', 'italic'],
];
const pads = ['pl-[2px]', 'pl-[21px]', 'pl-10'];
function control(kind, id) {
  if (kind === 'radio' || kind === 'radioon')
    return `<input type="radio" name="attribute" id="${id}" ${kind === 'radioon' ? 'checked' : ''} class="size-[13px] shrink-0 appearance-none rounded-full border border-[#2b6670] bg-[#ffffc0] checked:bg-[radial-gradient(circle,#800080_0_2px,#ffffc0_3px)]">`;
  if (kind === 'group')
    return `<input type="radio" name="group" id="${id}" checked class="size-[13px] shrink-0 appearance-none rounded-full border border-[#2b6670] bg-[radial-gradient(circle,#c07890_0_2px,#ffffc0_4px)]">`;
  if (!kind) return '<span class="size-[13px] shrink-0"></span>';
  const on = kind !== 'grey';
  const bg = kind === 'on' ? 'bg-[#ffffc8]' : 'bg-[#e4eaea]';
  return `<span class="grid size-[13px] shrink-0"><input type="checkbox" id="${id}" ${on ? 'checked' : ''} class="peer size-[13px] appearance-none border border-[#2b6670] [grid-area:1/1] ${bg}"><svg class="pointer-events-none invisible size-[13px] [grid-area:1/1] peer-checked:visible"><use href="#tick"/></svg></span>`;
}
document.getElementById('tree').innerHTML = tree.map(([l, e, i, c, t, s], n) =>
  `<div class="flex h-[18px] items-center ${pads[l]}"><span class="grid w-4 shrink-0 place-items-center">${e ? icon(e, 'size-2') : ''}</span><span class="ml-px flex">${icon(i)}</span><span class="mr-[6px] ml-[5px] flex">${control(c, 'node' + n)}</span><label for="node${n}" class="pt-[2px] whitespace-nowrap ${s}">${t}</label></div>`).join('');

const top1 = ['Input', 'Stratigraphy', 'Geophysics', 'Structural framework', 'Corner point gridding', 'Property modeling', 'Upscaling', 'Fracture network modeling', 'Well engineering', 'Simulation'];
const utils = [
  ['poly', 'Make/edit polygons', ''],
  ['surf', 'Make/edit surface', 'bg-[#0a78d7] font-bold text-white text-xs outline-1 outline-dotted outline-[#e08020] leading-[13px]'],
  ['grid', 'Make simple grid', ''],
  ['train', 'Train estimation model', ''],
  ['mapvol', 'Map-based volume calculation', ''],
  ['vol', 'Volume calculation', 'text-[#808080]'],
  ['uncert', 'Uncertainty and optimization', 'text-[#808080]'],
  ['nogo', 'Global grid coarsening', 'text-[#808080]'],
  ['geopoly', 'Make/edit geopolygons', ''],
  ['capture', 'Capture video and images', ''],
];
const top2 = ['Plug-ins', 'Play and prospect assessment', 'Geomechanics', 'Petroleum systems', 'Petroleum systems quick look', 'Production interpretation', 'Geosteering', 'GRM'];
const branch = (t, e) => `<button class="flex h-[18px] w-full items-center pl-[2px] text-xs font-bold text-[#00387c]"><span class="mr-[3px] grid w-4 place-items-center">${icon(e, 'size-2')}</span><span class="pt-[2px]">${t}</span></button>`;
document.getElementById('procs').innerHTML =
  top1.map(t => branch(t, 'shut')).join('') + branch('Utilities', 'opened') +
  utils.map(([i, t, s]) => `<button class="flex h-[18px] w-full items-center pl-[38px]">${icon(i)}<span class="ml-1 pt-[2px] whitespace-nowrap ${s}">${t}</span></button>`).join('') +
  top2.map(t => branch(t, 'shut')).join('');

// pane menu: icon, label, shown as toggled on
const menu = [
  ['archive', 'Archive', 0], ['cases', 'Cases', 1], ['star', 'Favorites', 1], ['folder', 'Input', 1],
  ['layouts', 'Layouts', 1], ['message', 'Message log', 1], ['models', 'Models', 1], ['wrench', 'Processes', 1],
  ['projects', 'Projects', 0], ['results', 'Results', 1], ['sfilter', 'Search filter', 0], ['sresults', 'Search results', 0],
  ['tasks', 'Tasks', 1], ['templates', 'Templates', 1], ['windows', 'Windows', 1], ['workflows', 'Workflows', 1],
];
document.getElementById('menu').innerHTML = menu.map(([i, t, on]) => {
  const hot = t === 'Processes' ? 'rounded-sm border-[#e8bc50] bg-linear-to-b from-[#fff0c0] to-[#ffe08a]' : 'border-transparent';
  const box = on ? 'border-[#f09a3c] bg-[#ffdc90]' : 'border-transparent';
  return `<button role="menuitem" class="flex h-[22px] w-full items-center border text-[#1e395b] ${hot}"><span class="ml-px grid size-5 shrink-0 place-items-center rounded-xs border ${box}">${icon(i)}</span><span class="ml-[2px] h-[22px] w-px bg-[#dcdcdc]"></span><span class="ml-[7px]">${t}</span></button>`;
}).join('');

const badges = [[140, 227], [520, 100], [598, 286], [105, 885], [211, 922]];
document.getElementById('badges').innerHTML = badges.map(([x, y], n) =>
  `<span class="absolute grid size-[22px] place-items-center rounded-full border-[3px] border-white bg-[#ff0505] shadow-[1px_2px_4px_rgba(0,0,0,0.7)]" style="left:${x - 11}px;top:${y - 11}px">${n + 1}</span>`).join('');
</script>
</body>
</html>
